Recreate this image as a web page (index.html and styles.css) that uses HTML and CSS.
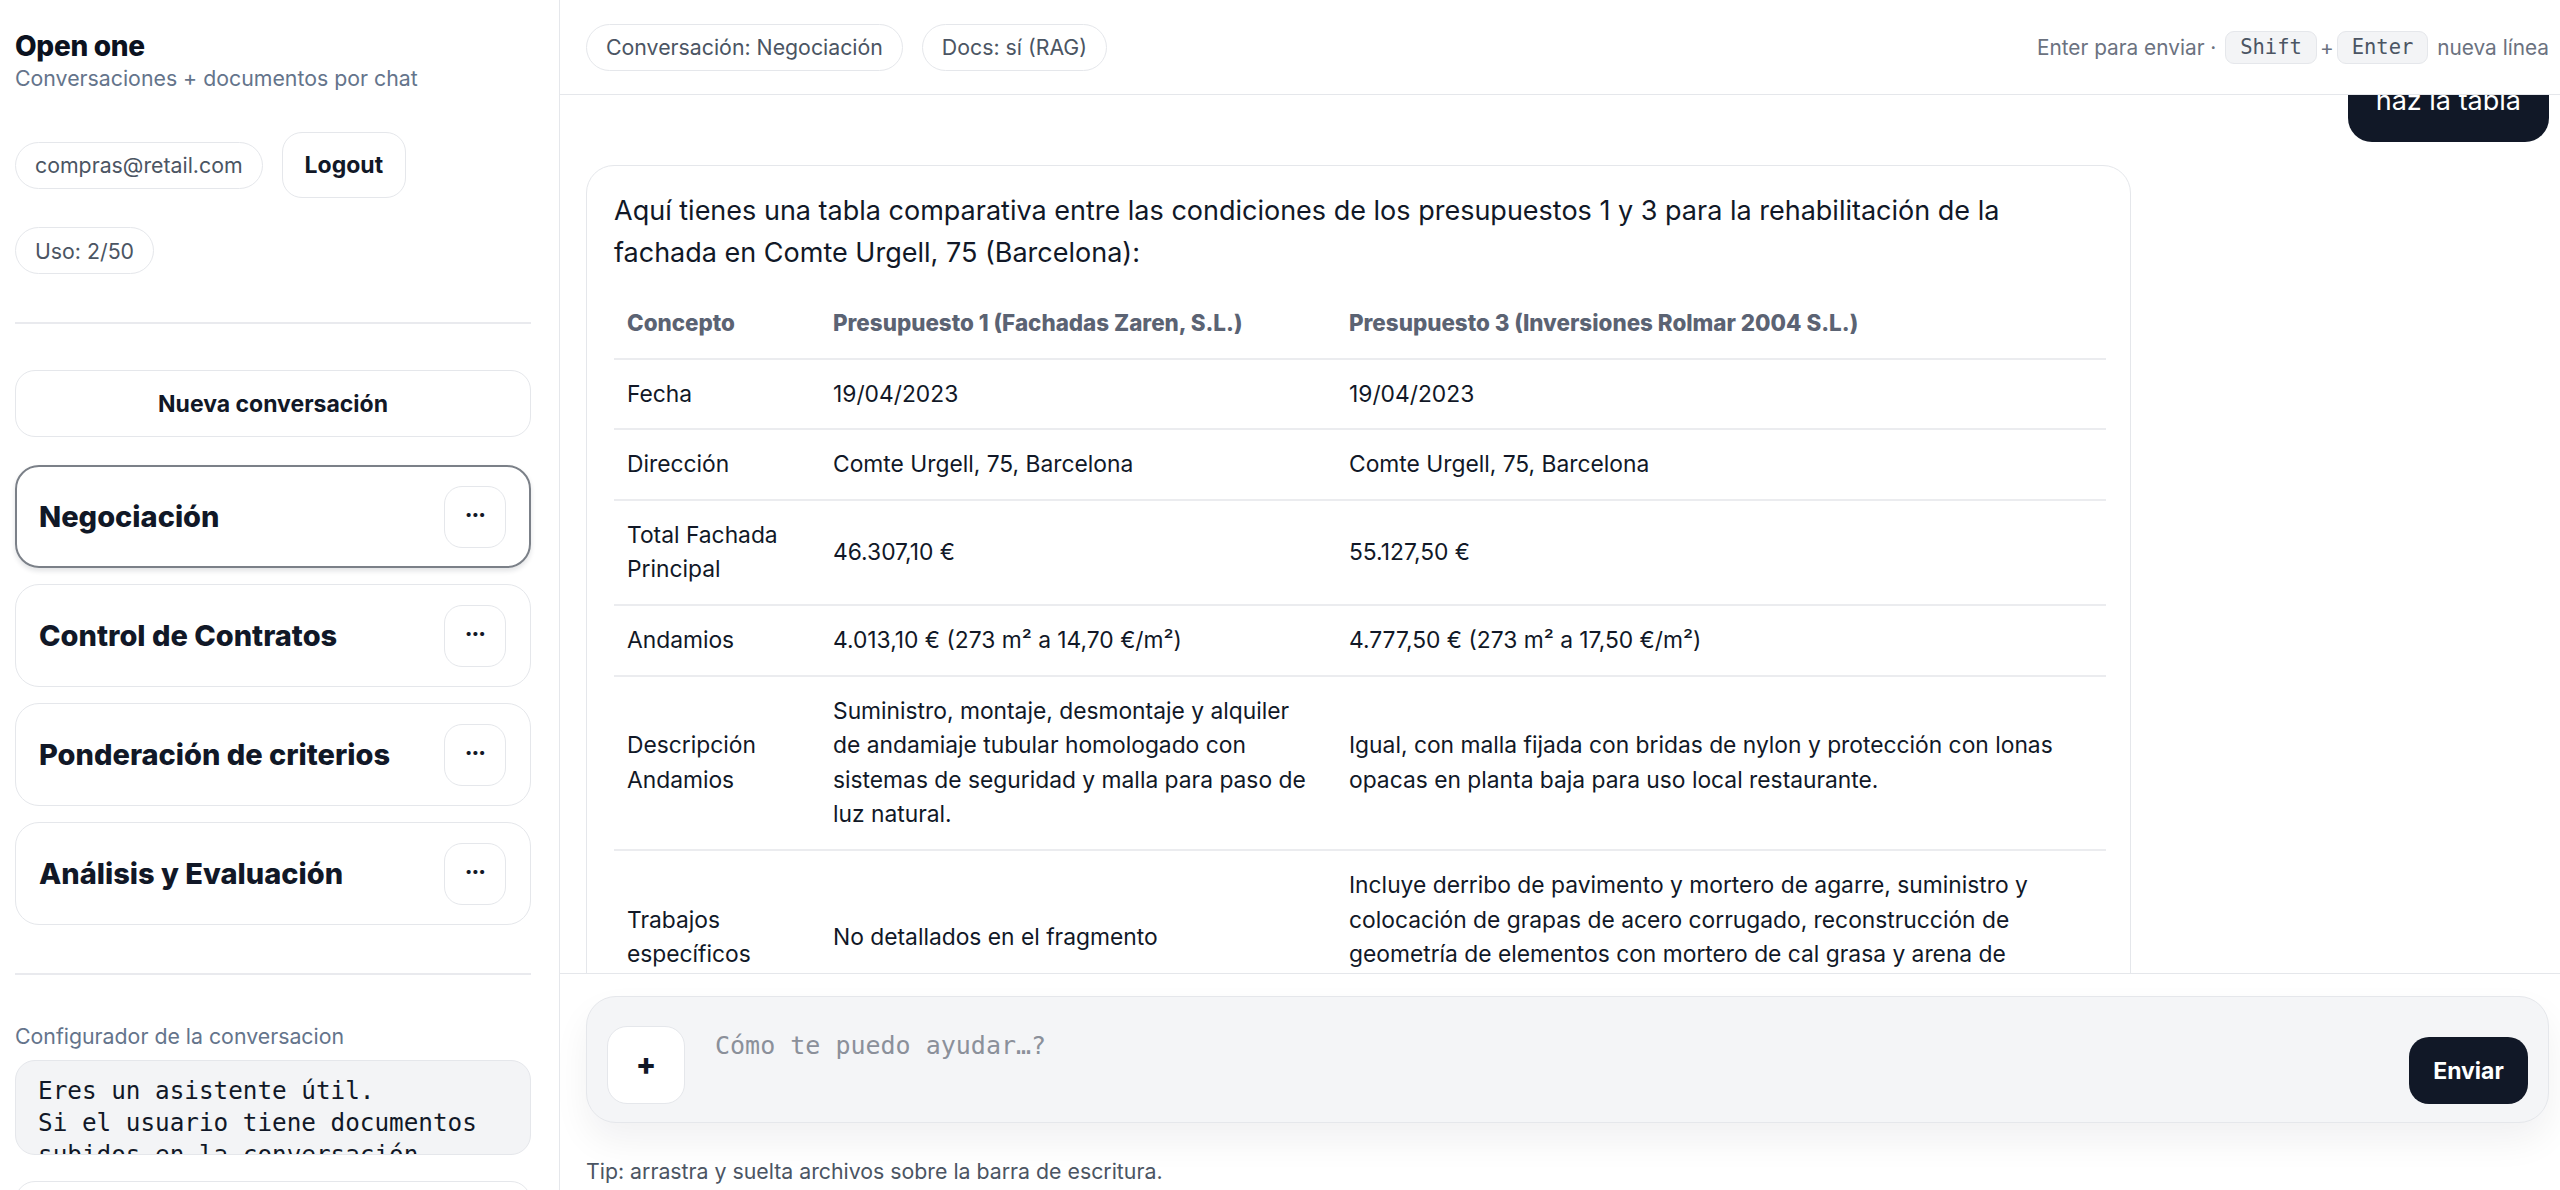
FILE: index.html
```html
<!DOCTYPE html>
<html lang="es">
<head>
<meta charset="utf-8">
<title>Open one</title>
<link rel="stylesheet" href="styles.css">
</head>
<body>
<div class="app">
  <aside class="sidebar">
    <div class="brand">
      <h1>Open one</h1>
      <p>Conversaciones + documentos por chat</p>
    </div>
    <div class="account">
      <span class="pill">compras@retail.com</span>
      <button class="btn">Logout</button>
    </div>
    <div class="usage"><span class="pill">Uso: 2/50</span></div>
    <hr class="rule">
    <button class="btn btn-new">Nueva conversación</button>
    <ul class="convs">
      <li class="conv active"><span>Negociación</span><button class="more">···</button></li>
      <li class="conv"><span>Control de Contratos</span><button class="more">···</button></li>
      <li class="conv"><span>Ponderación de criterios</span><button class="more">···</button></li>
      <li class="conv"><span>Análisis y Evaluación</span><button class="more">···</button></li>
    </ul>
    <hr class="rule rule-low">
    <label class="cfg-label" for="sys">Configurador de la conversacion</label>
    <textarea id="sys" class="cfg-prompt">Eres un asistente útil.
Si el usuario tiene documentos subidos en la conversación, utilízalos para responder.</textarea>
    <div class="cfg-next"></div>
  </aside>

  <main class="main">
    <header class="topbar">
      <div class="chips">
        <span class="pill">Conversación: Negociación</span>
        <span class="pill">Docs: sí (RAG)</span>
      </div>
      <div class="hint">Enter para enviar · <kbd>Shift</kbd>+<kbd>Enter</kbd> nueva línea</div>
    </header>

    <section class="messages">
      <div class="thread">
        <div class="msg-user">haz la tabla</div>
        <div class="msg-bot">
          <p>Aquí tienes una tabla comparativa entre las condiciones de los presupuestos 1 y 3 para la rehabilitación de la fachada en Comte Urgell, 75 (Barcelona):</p>
          <table class="cmp">
            <colgroup><col class="c1"><col class="c2"><col></colgroup>
            <thead>
              <tr><th>Concepto</th><th>Presupuesto 1 (Fachadas Zaren, S.L.)</th><th>Presupuesto 3 (Inversiones Rolmar 2004 S.L.)</th></tr>
            </thead>
            <tbody>
              <tr><td>Fecha</td><td>19/04/2023</td><td>19/04/2023</td></tr>
              <tr><td>Dirección</td><td>Comte Urgell, 75, Barcelona</td><td>Comte Urgell, 75, Barcelona</td></tr>
              <tr><td>Total Fachada Principal</td><td>46.307,10 €</td><td>55.127,50 €</td></tr>
              <tr><td>Andamios</td><td>4.013,10 € (273 m² a 14,70 €/m²)</td><td>4.777,50 € (273 m² a 17,50 €/m²)</td></tr>
              <tr><td>Descripción Andamios</td><td>Suministro, montaje, desmontaje y alquiler de andamiaje tubular homologado con sistemas de seguridad y malla para paso de luz natural.</td><td>Igual, con malla fijada con bridas de nylon y protección con lonas opacas en planta baja para uso local restaurante.</td></tr>
              <tr><td>Trabajos específicos</td><td>No detallados en el fragmento</td><td>Incluye derribo de pavimento y mortero de agarre, suministro y colocación de grapas de acero corrugado, reconstrucción de geometría de elementos con mortero de cal grasa y arena de granulometría controlada.</td></tr>
              <tr><td>Total</td><td>50.320,20 €</td><td>59.905,00 €</td></tr>
            </tbody>
          </table>
        </div>
      </div>
    </section>

    <footer class="dock">
      <div class="composer">
        <button class="attach">+</button>
        <textarea class="input" placeholder="Cómo te puedo ayudar…?"></textarea>
        <button class="send">Enviar</button>
      </div>
      <p class="tip">Tip: arrastra y suelta archivos sobre la barra de escritura.</p>
    </footer>
  </main>
</div>
</body>
</html>
```

FILE: styles.css
```css
* { box-sizing: border-box; }

html, body {
  margin: 0;
  height: 100%;
  background: #ffffff;
  color: #111827;
  font-family: Inter, "Noto Sans", sans-serif;
}

button, textarea { font-family: inherit; }

.app {
  display: flex;
  height: 1190px;
  overflow: hidden;
}

/* ---------- sidebar ---------- */
.sidebar {
  width: 560px;
  flex: none;
  border-right: 1px solid #e5e7eb;
  padding: 29px 28px 0 15px;
  display: flex;
  flex-direction: column;
  align-items: stretch;
  overflow: hidden;
}

.sidebar > * { flex: none; }

.brand h1 {
  margin: 0;
  font-size: 28px;
  line-height: 34px;
  font-weight: 800;
  letter-spacing: -0.3px;
  color: #0b1220;
}

.brand p {
  margin: 3px 0 0;
  font-size: 21.3px;
  line-height: 24px;
  color: #64748b;
}

.pill {
  display: inline-flex;
  align-items: center;
  height: 47px;
  padding: 0 19px;
  border: 1px solid #e5e7eb;
  border-radius: 999px;
  font-size: 21.3px;
  color: #4b5563;
  background: #fff;
  white-space: nowrap;
}

.btn {
  height: 66px;
  padding: 0 22px;
  border: 1px solid #e5e7eb;
  border-radius: 20px;
  background: #fff;
  color: #111827;
  font-size: 23px;
  font-weight: 700;
}

.account {
  margin-top: 42px;
  display: flex;
  align-items: center;
  gap: 19px;
}

.usage { margin-top: 29px; }

.rule {
  border: 0;
  border-top: 2px solid #e9eaee;
  margin: 48px 0 0;
  width: 100%;
}

.btn-new {
  margin-top: 46px;
  width: 100%;
  height: 67px;
}

.convs {
  list-style: none;
  margin: 28px 0 0;
  padding: 0;
  display: flex;
  flex-direction: column;
  gap: 16px;
}

.conv {
  height: 103px;
  border: 1px solid #e5e7eb;
  border-radius: 24px;
  padding: 0 24px 0 23px;
  display: flex;
  align-items: center;
  justify-content: space-between;
  font-size: 29px;
  font-weight: 800;
}

.conv.active {
  border: 2px solid #7b8088;
  box-shadow: 0 3px 5px rgba(17, 24, 39, 0.12);
  padding: 0 23px 0 22px;
}

.more {
  width: 62px;
  height: 62px;
  border: 1px solid #e5e7eb;
  border-radius: 18px;
  background: #fff;
  font-size: 22px;
  font-weight: 800;
  color: #111827;
  letter-spacing: -1px;
  padding: 0 0 4px;
}

.rule-low { margin-top: 48px; }

.cfg-label {
  margin-top: 49px;
  font-size: 21.3px;
  line-height: 24px;
  color: #64748b;
}

.cfg-prompt {
  margin-top: 12px;
  height: 95px;
  resize: none;
  border: 1px solid #e5e7eb;
  border-radius: 20px;
  background: #f3f4f6;
  padding: 14px 22px;
  font-family: "DejaVu Sans Mono", monospace;
  font-size: 24.3px;
  line-height: 32px;
  color: #111827;
  overflow: hidden;
}

.cfg-next {
  margin-top: 26px;
  height: 80px;
  border: 1px solid #e5e7eb;
  border-radius: 20px;
}

/* ---------- main column ---------- */
.main {
  flex: 1;
  min-width: 0;
  display: flex;
  flex-direction: column;
}

.topbar {
  height: 95px;
  flex: none;
  border-bottom: 1px solid #e5e7eb;
  padding: 0 11px 0 26px;
  display: flex;
  align-items: center;
  justify-content: space-between;
  position: relative;
  z-index: 1;
  background: #fff;
}

.chips { display: flex; gap: 19px; }

.hint {
  font-size: 20.8px;
  color: #6b7280;
  display: flex;
  align-items: center;
  gap: 3px;
  white-space: pre;
}

kbd {
  display: inline-block;
  height: 33px;
  line-height: 31px;
  padding: 0 14px;
  border: 1px solid #e5e7eb;
  border-radius: 9px;
  background: #f3f4f6;
  font-family: "DejaVu Sans Mono", monospace;
  font-size: 20.5px;
  color: #4b5563;
}

.messages {
  flex: 1;
  min-height: 0;
  overflow: hidden;
  padding: 0 11px 0 26px;
}

.thread {
  display: flex;
  flex-direction: column;
  gap: 23px;
}

.msg-user {
  align-self: flex-end;
  margin-top: -24px;
  background: #111827;
  color: #fff;
  font-size: 27px;
  line-height: 39px;
  padding: 10px 28px 22px;
  border-radius: 24px;
}

.msg-bot {
  width: 1545px;
  border: 1px solid #e5e7eb;
  border-radius: 28px;
  padding: 24px 24px 30px 27px;
  background: #fff;
}

.msg-bot p {
  margin: 0 0 15px;
  font-size: 27px;
  line-height: 42px;
  color: #111827;
}

.cmp {
  width: 100%;
  border-collapse: collapse;
  font-size: 22.8px;
  line-height: 34.6px;
  color: #111827;
}

.cmp col.c1 { width: 206px; }
.cmp col.c2 { width: 516px; }

.cmp th, .cmp td {
  text-align: left;
  vertical-align: middle;
  padding: 17px 21px 17px 13px;
  border-bottom: 2px solid #ebecef;
}

.cmp th {
  font-size: 22.4px;
  font-weight: 800;
  color: #5b6373;
}

/* ---------- composer ---------- */
.dock {
  flex: none;
  height: 217px;
  border-top: 1px solid #e5e7eb;
  padding: 22px 11px 0 26px;
  background: #fff;
}

.composer {
  display: flex;
  align-items: flex-end;
  gap: 30px;
  height: 127px;
  padding: 20px 20px 18px;
  border: 1px solid #e5e7eb;
  border-radius: 30px;
  background: #f4f5f7;
  box-shadow: 0 18px 36px rgba(17, 24, 39, 0.06);
}

.attach {
  width: 78px;
  height: 78px;
  flex: none;
  border: 1px solid #e5e7eb;
  border-radius: 20px;
  background: #fff;
  font-size: 30px;
  font-weight: 800;
  color: #111827;
  padding: 0 0 3px;
}

.input {
  flex: 1;
  height: 86px;
  border: 0;
  background: transparent;
  resize: none;
  padding: 12px 0 0;
  font-family: "DejaVu Sans Mono", monospace;
  font-size: 25px;
  line-height: 32px;
  color: #111827;
  outline: none;
}

.input::placeholder { color: #8b909a; }

.send {
  width: 119px;
  height: 67px;
  flex: none;
  border: 0;
  border-radius: 20px;
  background: #111827;
  color: #fff;
  font-size: 23px;
  font-weight: 700;
}

.tip {
  margin: 36px 0 0;
  font-size: 21.3px;
  line-height: 24px;
  color: #4b5563;
}
```
